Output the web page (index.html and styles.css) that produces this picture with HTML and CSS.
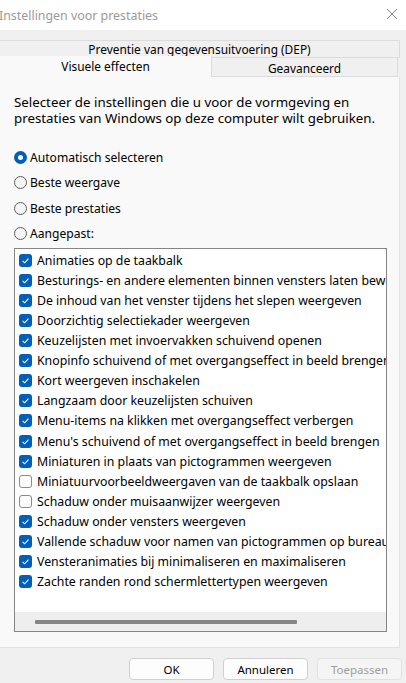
FILE: index.html
```html
<!DOCTYPE html>
<html lang="nl">
  <head>
    <meta charset="UTF-8" />
    <meta name="viewport" content="width=device-width, initial-scale=1.0" />
    <title>Instellingen voor prestaties</title>
    <link rel="stylesheet" href="styles.css">
  </head>
  <body>
    <div class="titlebar">
      <span class="title">Instellingen voor prestaties</span>
      <svg class="close" width="12" height="12" viewBox="0 0 12 12">
        <path d="M1 1 L11 11 M11 1 L1 11" stroke="#8a8a8a" stroke-width="1" fill="none" />
      </svg>
    </div>

    <div class="tabs">
      <div class="tab tab-top">Preventie van gegevensuitvoering (DEP)</div>
      <div class="tab-row">
        <div class="tab tab-active">Visuele effecten</div>
        <div class="tab tab-side">Geavanceerd</div>
      </div>
    </div>

    <div class="panel">
      <p class="intro">Selecteer de instellingen die u voor de vormgeving en</p>
      <p class="intro">prestaties van Windows op deze computer wilt gebruiken.</p>

      <div class="radios">
        <div class="radio checked"><span class="dot"></span>Automatisch selecteren</div>
        <div class="radio"><span class="dot"></span>Beste weergave</div>
        <div class="radio"><span class="dot"></span>Beste prestaties</div>
        <div class="radio"><span class="dot"></span>Aangepast:</div>
      </div>

      <div class="listbox">
        <div class="items">
          <div class="item"><span class="box on"></span>Animaties op de taakbalk</div>
          <div class="item"><span class="box on"></span>Besturings- en andere elementen binnen vensters laten bewegen</div>
          <div class="item"><span class="box on"></span>De inhoud van het venster tijdens het slepen weergeven</div>
          <div class="item"><span class="box on"></span>Doorzichtig selectiekader weergeven</div>
          <div class="item"><span class="box on"></span>Keuzelijsten met invoervakken schuivend openen</div>
          <div class="item"><span class="box on"></span>Knopinfo schuivend of met overgangseffect in beeld brengen</div>
          <div class="item"><span class="box on"></span>Kort weergeven inschakelen</div>
          <div class="item"><span class="box on"></span>Langzaam door keuzelijsten schuiven</div>
          <div class="item"><span class="box on"></span>Menu-items na klikken met overgangseffect verbergen</div>
          <div class="item"><span class="box on"></span>Menu's schuivend of met overgangseffect in beeld brengen</div>
          <div class="item"><span class="box on"></span>Miniaturen in plaats van pictogrammen weergeven</div>
          <div class="item"><span class="box"></span>Miniatuurvoorbeeldweergaven van de taakbalk opslaan</div>
          <div class="item"><span class="box"></span>Schaduw onder muisaanwijzer weergeven</div>
          <div class="item"><span class="box on"></span>Schaduw onder vensters weergeven</div>
          <div class="item"><span class="box on"></span>Vallende schaduw voor namen van pictogrammen op bureaublad</div>
          <div class="item"><span class="box on"></span>Vensteranimaties bij minimaliseren en maximaliseren</div>
          <div class="item"><span class="box on"></span>Zachte randen rond schermlettertypen weergeven</div>
        </div>
        <div class="hscroll"><div class="thumb"></div></div>
      </div>
    </div>

    <div class="buttons">
      <button>OK</button>
      <button>Annuleren</button>
      <button class="disabled">Toepassen</button>
    </div>
  </body>
</html>
```

FILE: styles.css
```css
body {
  margin: 0;
  background: #f0f0f0;
  font-family: "Noto Sans", "Open Sans", sans-serif;
  font-size: 12.3px;
  color: #000;
  width: 406px;
  overflow: hidden;
}
.titlebar {
  height: 30px;
  background: #fff;
  display: flex;
  align-items: center;
  justify-content: space-between;
  padding-right: 8px;
}
.title {
  color: #9a9a9a;
  font-size: 12.4px;
  margin-left: -1px;
}
.close {
  margin-top: -3px;
}
.tabs {
  margin-top: 10px;
  width: 400px;
  font-size: 11.9px;
}
.tab {
  box-sizing: border-box;
  text-align: center;
  border: 1px solid #dcdcdc;
  background: #f0f0f0;
}
.tab-top {
  height: 18px;
  line-height: 17px;
  border-left: none;
}
.tab-row {
  display: flex;
  align-items: flex-end;
  height: 19px;
}
.tab-active {
  width: 212px;
  height: 21px;
  line-height: 20px;
  margin-top: -2px;
  background: #f9f9f9;
  border: none;
  border-right: 1px solid #dcdcdc;
  position: relative;
  z-index: 1;
}
.tab-side {
  width: 186px;
  height: 19px;
  line-height: 21px;
  border-left: none;
  border-top: none;
}
.panel {
  box-sizing: border-box;
  width: 400px;
  height: 571px;
  background: #f9f9f9;
  border-right: 1px solid #e2e2e2;
  border-bottom: 1px solid #e2e2e2;
  padding: 17px 0 0 14px;
}
.intro {
  margin: 0;
  height: 16px;
  line-height: 16px;
  font-size: 13.3px;
  white-space: nowrap;
}
.radios {
  margin-top: 19px;
}
.radio {
  display: flex;
  align-items: center;
  height: 25.3px;
  font-size: 12.1px;
}
.dot {
  box-sizing: border-box;
  width: 13px;
  height: 13px;
  border-radius: 50%;
  border: 1px solid #5d5d5d;
  background: #f5f5f5;
  margin-right: 3px;
}
.radio.checked .dot {
  border: 4px solid #005fb8;
  background: #fff;
}
.listbox {
  box-sizing: border-box;
  width: 373px;
  height: 384px;
  margin-top: 2px;
  border: 1px solid #858585;
  background: #fff;
  display: flex;
  flex-direction: column;
}
.items {
  flex: 1;
  overflow: hidden;
  padding-top: 1px;
}
.item {
  display: flex;
  align-items: center;
  height: 20.1px;
  white-space: nowrap;
  padding-left: 4px;
}
.box {
  flex: none;
  box-sizing: border-box;
  width: 13px;
  height: 13px;
  border-radius: 3px;
  border: 1px solid #8a8a8a;
  background: #fbfbfb;
  margin-right: 5px;
}
.box.on {
  border: none;
  background: #005fb8 url("data:image/svg+xml,%3Csvg xmlns='http://www.w3.org/2000/svg' width='13' height='13'%3E%3Cpath d='M3.6 6.9 L5.6 8.8 L9.5 4.6' stroke='white' stroke-width='1.1' fill='none'/%3E%3C/svg%3E") no-repeat;
}
.hscroll {
  flex: none;
  height: 19px;
  background: #eeeeee;
  display: flex;
  align-items: center;
}
.thumb {
  width: 262px;
  height: 4px;
  margin-left: 20px;
  background: #868686;
  border-radius: 1px;
}
.buttons {
  display: flex;
  justify-content: flex-end;
  gap: 9px;
  padding: 10px 4px 0 0;
}
button {
  width: 85px;
  height: 22px;
  font-family: inherit;
  font-size: 11.5px;
  border: 1px solid #d0d0d0;
  border-radius: 4px;
  background: #fdfdfd;
  color: #000;
  padding: 0;
}
button.disabled {
  color: #9d9d9d;
  background: #f5f5f5;
  border-color: #e2e2e2;
}
```
